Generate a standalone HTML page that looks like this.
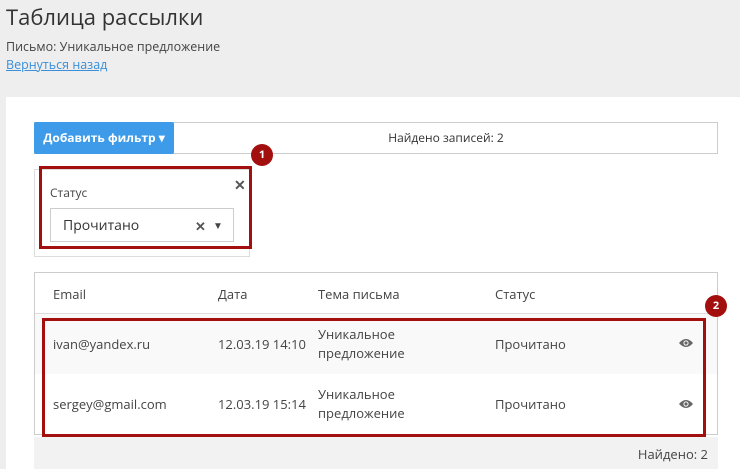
<!DOCTYPE html><html><head><meta charset="utf-8"><style>
body{margin:0;width:740px;height:469px;background:#eee;font-family:"Open Sans","Liberation Sans",sans-serif;color:#333;position:relative;overflow:hidden}
.a{position:absolute}
.red{position:absolute;border:3px solid #a30f0f;box-sizing:border-box}
.badge{position:absolute;width:22px;height:22px;border-radius:50%;background:#a30f0f;color:#fff;font-size:11px;font-weight:bold;text-align:center;line-height:22px}
.td{position:absolute;font-size:13px;color:#444}
</style></head><body>
<div class="a" style="left:6px;top:2px;font-size:22px;color:#333">Таблица рассылки</div>
<div class="a" style="left:6px;top:38px;font-size:12.5px;color:#444">Письмо: Уникальное предложение</div>
<div class="a" style="left:6px;top:56px;font-size:12.5px;color:#3a8fd8;text-decoration:underline">Вернуться назад</div>
<div class="a" style="left:6px;top:97px;width:734px;height:372px;background:#fff"></div>
<div class="a" style="left:34px;top:122px;width:684px;height:32px;border:1px solid #ccc;box-sizing:border-box"></div>
<div class="a" style="left:34px;top:122px;width:140px;height:32px;background:#3d9be9;border-radius:2px;color:#fff;font-size:12px;font-weight:bold;line-height:32px;text-align:center">Добавить фильтр ▾</div>
<div class="a" style="left:174px;top:122px;width:544px;line-height:32px;text-align:center;font-size:12px;color:#333">Найдено записей: 2</div>
<div class="a" style="left:34px;top:169px;width:216px;height:88px;border:1px solid #ddd;box-sizing:border-box"></div>
<div class="a" style="left:50px;top:184px;font-size:12px;color:#444">Статус</div>
<div class="a" style="left:234px;top:176px;font-size:14px;font-weight:bold;color:#555">✕</div>
<div class="a" style="left:50px;top:208px;width:184px;height:34px;border:1px solid #ccc;box-sizing:border-box"></div>
<div class="a" style="left:63px;top:216px;font-size:14px;color:#333">Прочитано</div>
<div class="a" style="left:195px;top:217px;font-size:13px;font-weight:bold;color:#555">✕</div>
<div class="a" style="left:213px;top:218px;font-size:10px;color:#444">▼</div>
<div class="red" style="left:39px;top:166px;width:213px;height:83px"></div>
<div class="badge" style="left:251px;top:144px">1</div>
<div class="a" style="left:34px;top:272px;width:684px;height:163px;border:1px solid #ccc;box-sizing:border-box"></div>
<div class="a" style="left:35px;top:313px;width:682px;height:1px;background:#ddd"></div>
<div class="a" style="left:35px;top:314px;width:682px;height:60px;background:#f9f9f9"></div>
<div class="td" style="left:53px;top:285px">Email</div>
<div class="td" style="left:218px;top:285px">Дата</div>
<div class="td" style="left:318px;top:285px">Тема письма</div>
<div class="td" style="left:495px;top:285px">Статус</div>
<div class="td" style="left:53px;top:335px">ivan@yandex.ru</div>
<div class="td" style="left:218px;top:335px">12.03.19 14:10</div>
<div class="td" style="left:318px;top:325px;line-height:19px">Уникальное<br>предложение</div>
<div class="td" style="left:495px;top:335px">Прочитано</div>
<div class="td" style="left:53px;top:395px">sergey@gmail.com</div>
<div class="td" style="left:218px;top:395px">12.03.19 15:14</div>
<div class="td" style="left:318px;top:385px;line-height:19px">Уникальное<br>предложение</div>
<div class="td" style="left:495px;top:395px">Прочитано</div>
<svg class="a" style="left:679px;top:338px" width="14" height="10" viewBox="0 0 14 10"><path d="M0 5Q7-3 14 5Q7 13 0 5Z" fill="#666"/><circle cx="7" cy="5" r="2.6" fill="#fff"/><circle cx="7" cy="5" r="1.6" fill="#666"/></svg>
<svg class="a" style="left:679px;top:399px" width="14" height="10" viewBox="0 0 14 10"><path d="M0 5Q7-3 14 5Q7 13 0 5Z" fill="#666"/><circle cx="7" cy="5" r="2.6" fill="#fff"/><circle cx="7" cy="5" r="1.6" fill="#666"/></svg>
<div class="red" style="left:42px;top:318px;width:664px;height:119px"></div>
<div class="badge" style="left:705px;top:295px">2</div>
<div class="a" style="left:34px;top:437px;width:684px;height:32px;background:#f2f2f2"></div>
<div class="a" style="left:600px;top:445px;width:108px;text-align:right;font-size:13px;color:#444">Найдено: 2</div>
</body></html>
